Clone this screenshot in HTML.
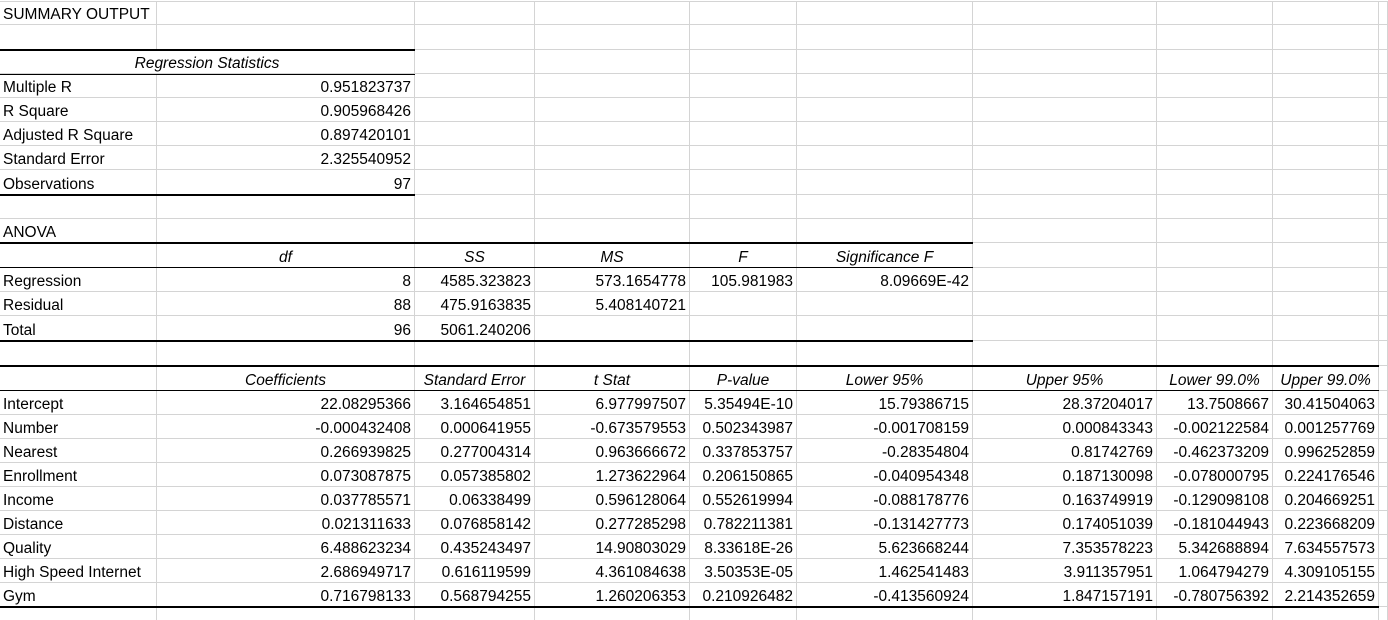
<!DOCTYPE html>
<html><head><meta charset="utf-8"><style>
html,body{margin:0;padding:0;background:#fff;width:1388px;height:620px;overflow:hidden}
body{font-family:"Liberation Sans",sans-serif;font-size:15.5px;color:#000;position:relative}
table{position:absolute;left:0;top:1px;border-collapse:separate;border-spacing:0;table-layout:fixed;border-top:1px solid #d4d4d4}
td{height:24px;padding:5px 3px 0 3px;border-right:1px solid #d4d4d4;border-bottom:1px solid #d4d4d4;white-space:nowrap;overflow:visible;line-height:18px;box-sizing:border-box}
tr.s td{height:23px;padding-top:4px}
tr.b td{height:25px;padding-top:6px}
.r{text-align:right}.c{text-align:center;font-style:italic}
.h{position:absolute;height:2px;background:#000}
.t{position:absolute;height:1px;background:#000}
</style></head><body>
<table>
<colgroup><col style="width:157px"><col style="width:258px"><col style="width:120px"><col style="width:155px"><col style="width:107px"><col style="width:176px"><col style="width:184px"><col style="width:116px"><col style="width:106px"><col style="width:9px"></colgroup>
<tr class="s"><td>SUMMARY OUTPUT</td><td></td><td></td><td></td><td></td><td></td><td></td><td></td><td></td><td></td></tr>
<tr class="b"><td></td><td></td><td></td><td></td><td></td><td></td><td></td><td></td><td></td><td></td></tr>
<tr><td colspan="2" class="c">Regression Statistics</td><td></td><td></td><td></td><td></td><td></td><td></td><td></td><td></td></tr>
<tr><td>Multiple R</td><td class="r">0.951823737</td><td></td><td></td><td></td><td></td><td></td><td></td><td></td><td></td></tr>
<tr><td>R Square</td><td class="r">0.905968426</td><td></td><td></td><td></td><td></td><td></td><td></td><td></td><td></td></tr>
<tr><td>Adjusted R Square</td><td class="r">0.897420101</td><td></td><td></td><td></td><td></td><td></td><td></td><td></td><td></td></tr>
<tr><td>Standard Error</td><td class="r">2.325540952</td><td></td><td></td><td></td><td></td><td></td><td></td><td></td><td></td></tr>
<tr class="b"><td>Observations</td><td class="r">97</td><td></td><td></td><td></td><td></td><td></td><td></td><td></td><td></td></tr>
<tr><td></td><td></td><td></td><td></td><td></td><td></td><td></td><td></td><td></td><td></td></tr>
<tr><td>ANOVA</td><td></td><td></td><td></td><td></td><td></td><td></td><td></td><td></td><td></td></tr>
<tr class="b"><td></td><td class="c">df</td><td class="c">SS</td><td class="c">MS</td><td class="c">F</td><td class="c">Significance F</td><td></td><td></td><td></td><td></td></tr>
<tr><td>Regression</td><td class="r">8</td><td class="r">4585.323823</td><td class="r">573.1654778</td><td class="r">105.981983</td><td class="r">8.09669E-42</td><td></td><td></td><td></td><td></td></tr>
<tr><td>Residual</td><td class="r">88</td><td class="r">475.9163835</td><td class="r">5.408140721</td><td></td><td></td><td></td><td></td><td></td><td></td></tr>
<tr class="b"><td>Total</td><td class="r">96</td><td class="r">5061.240206</td><td></td><td></td><td></td><td></td><td></td><td></td><td></td></tr>
<tr class="b"><td></td><td></td><td></td><td></td><td></td><td></td><td></td><td></td><td></td><td></td></tr>
<tr class="b"><td></td><td class="c">Coefficients</td><td class="c">Standard Error</td><td class="c">t Stat</td><td class="c">P-value</td><td class="c">Lower 95%</td><td class="c">Upper 95%</td><td class="c">Lower 99.0%</td><td class="c">Upper 99.0%</td><td></td></tr>
<tr><td>Intercept</td><td class="r">22.08295366</td><td class="r">3.164654851</td><td class="r">6.977997507</td><td class="r">5.35494E-10</td><td class="r">15.79386715</td><td class="r">28.37204017</td><td class="r">13.7508667</td><td class="r">30.41504063</td><td></td></tr>
<tr><td>Number</td><td class="r">-0.000432408</td><td class="r">0.000641955</td><td class="r">-0.673579553</td><td class="r">0.502343987</td><td class="r">-0.001708159</td><td class="r">0.000843343</td><td class="r">-0.002122584</td><td class="r">0.001257769</td><td></td></tr>
<tr><td>Nearest</td><td class="r">0.266939825</td><td class="r">0.277004314</td><td class="r">0.963666672</td><td class="r">0.337853757</td><td class="r">-0.28354804</td><td class="r">0.81742769</td><td class="r">-0.462373209</td><td class="r">0.996252859</td><td></td></tr>
<tr><td>Enrollment</td><td class="r">0.073087875</td><td class="r">0.057385802</td><td class="r">1.273622964</td><td class="r">0.206150865</td><td class="r">-0.040954348</td><td class="r">0.187130098</td><td class="r">-0.078000795</td><td class="r">0.224176546</td><td></td></tr>
<tr><td>Income</td><td class="r">0.037785571</td><td class="r">0.06338499</td><td class="r">0.596128064</td><td class="r">0.552619994</td><td class="r">-0.088178776</td><td class="r">0.163749919</td><td class="r">-0.129098108</td><td class="r">0.204669251</td><td></td></tr>
<tr><td>Distance</td><td class="r">0.021311633</td><td class="r">0.076858142</td><td class="r">0.277285298</td><td class="r">0.782211381</td><td class="r">-0.131427773</td><td class="r">0.174051039</td><td class="r">-0.181044943</td><td class="r">0.223668209</td><td></td></tr>
<tr><td>Quality</td><td class="r">6.488623234</td><td class="r">0.435243497</td><td class="r">14.90803029</td><td class="r">8.33618E-26</td><td class="r">5.623668244</td><td class="r">7.353578223</td><td class="r">5.342688894</td><td class="r">7.634557573</td><td></td></tr>
<tr><td>High Speed Internet</td><td class="r">2.686949717</td><td class="r">0.616119599</td><td class="r">4.361084638</td><td class="r">3.50353E-05</td><td class="r">1.462541483</td><td class="r">3.911357951</td><td class="r">1.064794279</td><td class="r">4.309105155</td><td></td></tr>
<tr><td>Gym</td><td class="r">0.716798133</td><td class="r">0.568794255</td><td class="r">1.260206353</td><td class="r">0.210926482</td><td class="r">-0.413560924</td><td class="r">1.847157191</td><td class="r">-0.780756392</td><td class="r">2.214352659</td><td></td></tr>
<tr><td></td><td></td><td></td><td></td><td></td><td></td><td></td><td></td><td></td><td></td></tr>
</table>
<div class="h" style="left:0;width:415px;top:49px"></div>
<div class="t" style="left:0;width:415px;top:74px"></div>
<div class="h" style="left:0;width:415px;top:194px"></div>
<div class="h" style="left:0;width:973px;top:242px"></div>
<div class="t" style="left:0;width:973px;top:267px"></div>
<div class="h" style="left:0;width:973px;top:340px"></div>
<div class="h" style="left:0;width:1379px;top:365px"></div>
<div class="t" style="left:0;width:1379px;top:390px"></div>
<div class="h" style="left:0;width:1379px;top:606px"></div>
</body></html>
